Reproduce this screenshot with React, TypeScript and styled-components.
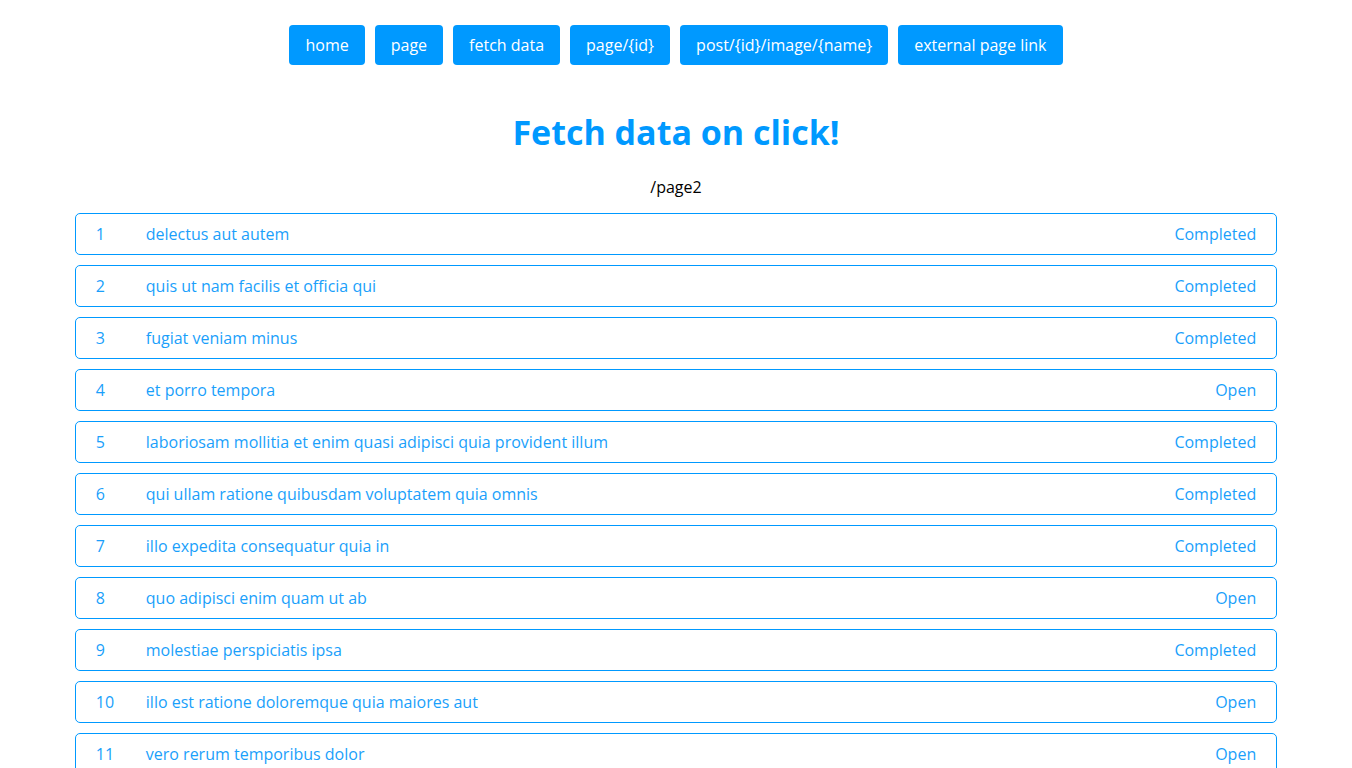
import React from "react";
import styled, { createGlobalStyle } from "styled-components";

const GlobalStyle = createGlobalStyle`
  body {
    margin: 8px;
    background: #ffffff;
    font-family: "Open Sans", "Noto Sans", sans-serif;
    color: #000;
  }
`;

const links = [
  "home",
  "page",
  "fetch data",
  "page/{id}",
  "post/{id}/image/{name}",
  "external page link",
];

const todos: { id: number; title: string; done: boolean }[] = [
  { id: 1, title: "delectus aut autem", done: true },
  { id: 2, title: "quis ut nam facilis et officia qui", done: true },
  { id: 3, title: "fugiat veniam minus", done: true },
  { id: 4, title: "et porro tempora", done: false },
  { id: 5, title: "laboriosam mollitia et enim quasi adipisci quia provident illum", done: true },
  { id: 6, title: "qui ullam ratione quibusdam voluptatem quia omnis", done: true },
  { id: 7, title: "illo expedita consequatur quia in", done: true },
  { id: 8, title: "quo adipisci enim quam ut ab", done: false },
  { id: 9, title: "molestiae perspiciatis ipsa", done: true },
  { id: 10, title: "illo est ratione doloremque quia maiores aut", done: false },
  { id: 11, title: "vero rerum temporibus dolor", done: false },
  { id: 12, title: "ipsa repellendus fugit nisi", done: true },
];

const App: React.FC = () => {
  return (
    <>
      <GlobalStyle />
      <Page>
        <Nav>
          {links.map((l) => (
            <NavButton key={l}>{l}</NavButton>
          ))}
        </Nav>
        <Title>Fetch data on click!</Title>
        <Path>/page2</Path>
        <List>
          {todos.map((t) => (
            <Row key={t.id}>
              <Num>{t.id}</Num>
              <TodoTitle>{t.title}</TodoTitle>
              <Status>{t.done ? "Completed" : "Open"}</Status>
            </Row>
          ))}
        </List>
      </Page>
    </>
  );
};

export default App;

const Page = styled.div`
  display: flex;
  flex-direction: column;
  align-items: center;
`;

const Nav = styled.nav`
  display: flex;
  gap: 10px;
  margin-top: 17px;
`;

const NavButton = styled.button`
  height: 40px;
  padding: 0 16px;
  border: 0;
  border-radius: 4px;
  background-color: #0099ff;
  color: #ffffff;
  font-family: inherit;
  font-size: 16px;
  cursor: pointer;
`;

const Title = styled.h1`
  margin: 43px 0 0;
  font-size: 34px;
  line-height: 48px;
  font-weight: 700;
  color: #0099ff;
`;

const Path = styled.div`
  margin-top: 21px;
  font-size: 16px;
  line-height: 20px;
`;

const List = styled.div`
  width: 90%;
  margin-top: 16px;
  display: flex;
  flex-direction: column;
  gap: 10px;
`;

const Row = styled.div`
  display: flex;
  align-items: center;
  height: 42px;
  box-sizing: border-box;
  padding: 0 20px;
  border: 1px solid #0099ff;
  border-radius: 5px;
  color: #1a9ffb;
  font-size: 16px;
`;

const Num = styled.span`
  width: 50px;
  flex-shrink: 0;
`;

const TodoTitle = styled.span`
  flex: 1;
`;

const Status = styled.span`
  text-align: right;
`;
